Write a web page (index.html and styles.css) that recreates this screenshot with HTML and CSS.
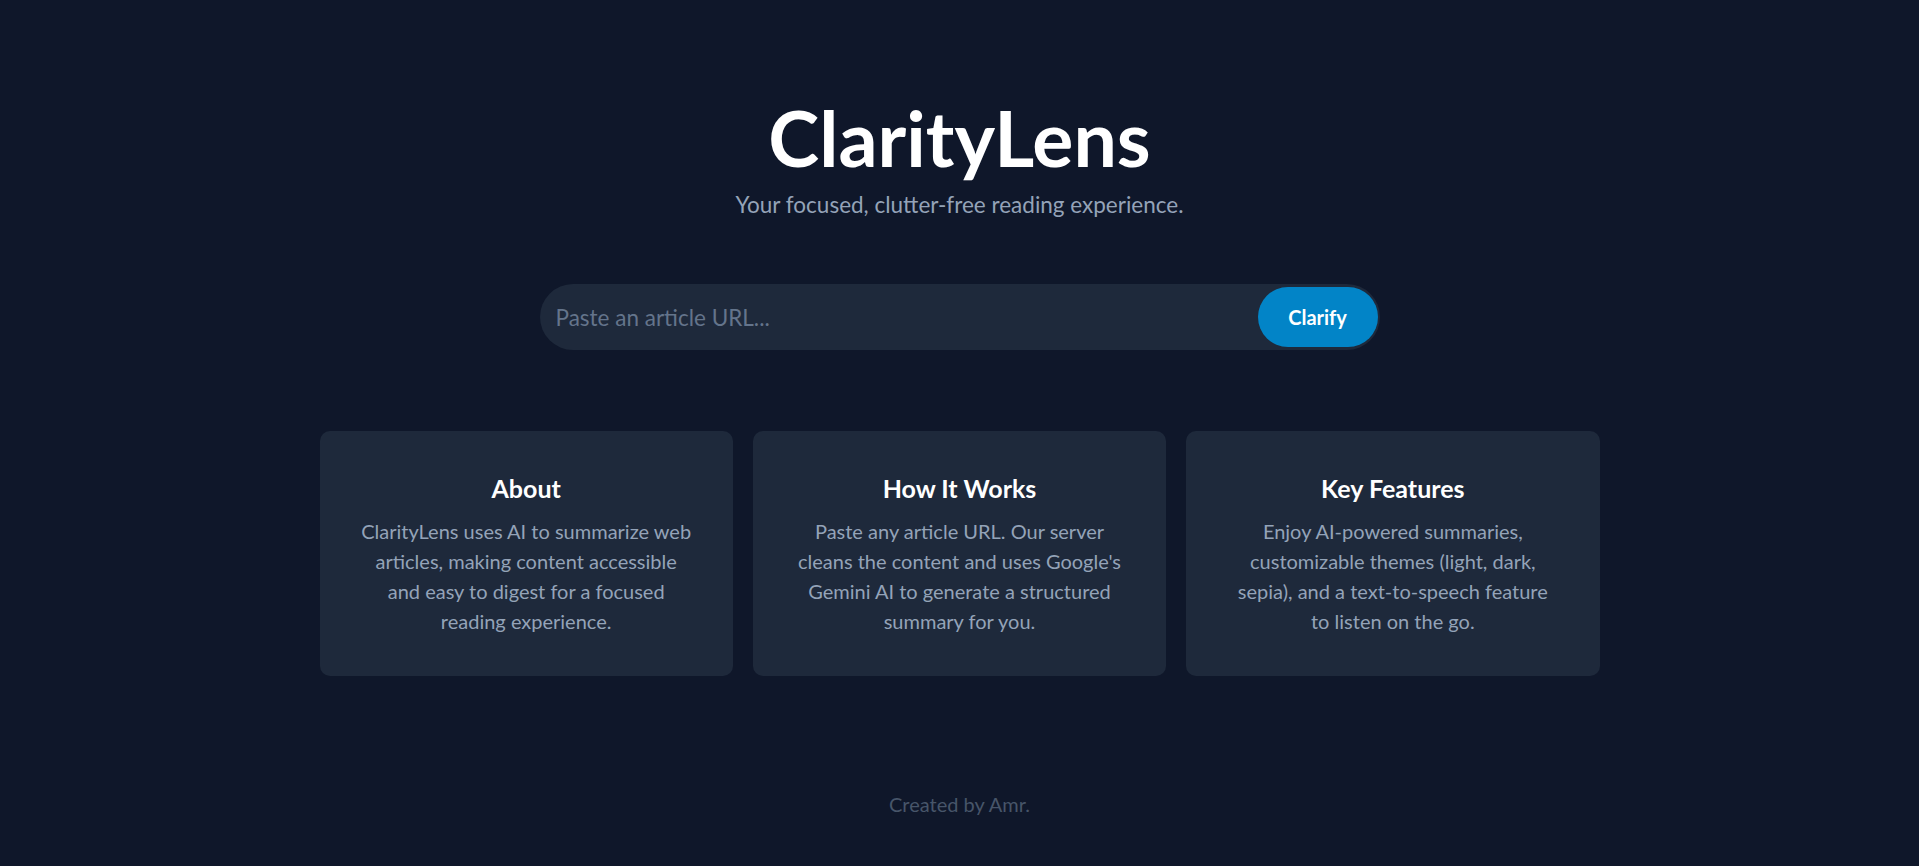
FILE: index.html
```html
<!DOCTYPE html>
<html lang="en">
<head>
    <meta charset="utf-8" />
    <title>ClarityLens</title>
    <link rel="stylesheet" href="styles.css">
</head>
<body>
<main class="page">
    <header class="hero">
        <h1 class="hero-title">ClarityLens</h1>
        <p class="hero-tagline">Your focused, clutter-free reading experience.</p>
    </header>

    <form class="search" onsubmit="return false">
        <input class="search-input" type="url" placeholder="Paste an article URL...">
        <button class="search-button" type="submit">Clarify</button>
    </form>

    <section class="cards">
        <div class="card">
            <h3 class="card-title">About</h3>
            <p class="card-text">ClarityLens uses AI to summarize web articles, making content accessible and easy to digest for a focused reading experience.</p>
        </div>
        <div class="card">
            <h3 class="card-title">How It Works</h3>
            <p class="card-text">Paste any article URL. Our server cleans the content and uses Google's Gemini AI to generate a structured summary for you.</p>
        </div>
        <div class="card">
            <h3 class="card-title">Key Features</h3>
            <p class="card-text">Enjoy AI-powered summaries, customizable themes (light, dark, sepia), and a text-to-speech feature to listen on the go.</p>
        </div>
    </section>
</main>
<footer class="footer">Created by Amr.</footer>
</body>
</html>
```

FILE: styles.css
```css
body{
    margin: 0;
    background: #0f172a;
    color: #94a3b8;
    font-family: Lato, "Open Sans", "Liberation Sans", sans-serif;
}
.page{
    padding-top: 100px;
    display: flex;
    flex-direction: column;
    align-items: center;
}
.hero{
    text-align: center;
}
.hero-title{
    margin: 0;
    font-size: 77px;
    line-height: 75px;
    font-weight: 700;
    color: #fff;
}
.hero-tagline{
    margin: 12px 0 0;
    font-size: 22.5px;
    line-height: 35px;
    color: #94a3b8;
}
.search{
    margin-top: 62px;
    width: 840px;
    height: 66px;
    box-sizing: border-box;
    padding: 3px 2px 3px 0;
    display: flex;
    align-items: stretch;
    background: #1e293b;
    border-radius: 33px;
}
.search-input{
    flex: 1;
    min-width: 0;
    background: transparent;
    border: none;
    outline: none;
    padding: 0 16px;
    font-family: inherit;
    font-size: 22.5px;
    color: #e2e8f0;
}
.search-input::placeholder{
    color: #64748b;
}
.search-button{
    width: 120px;
    border: none;
    border-radius: 30px;
    background: #0284c7;
    color: #fff;
    font-family: inherit;
    font-size: 20px;
    font-weight: 700;
    cursor: pointer;
}
.cards{
    margin-top: 81px;
    width: 1280px;
    display: grid;
    grid-template-columns: repeat(3, 1fr);
    gap: 20px;
}
.card{
    background: #1e293b;
    border-radius: 10px;
    padding: 40px;
    text-align: center;
}
.card-title{
    margin: 0 0 10px;
    font-size: 25px;
    line-height: 35px;
    font-weight: 700;
    color: #fff;
}
.card-text{
    margin: 0;
    font-size: 20px;
    line-height: 30px;
    color: #94a3b8;
}
.footer{
    margin-top: 113px;
    text-align: center;
    font-size: 20px;
    line-height: 30px;
    color: #475569;
}
```
